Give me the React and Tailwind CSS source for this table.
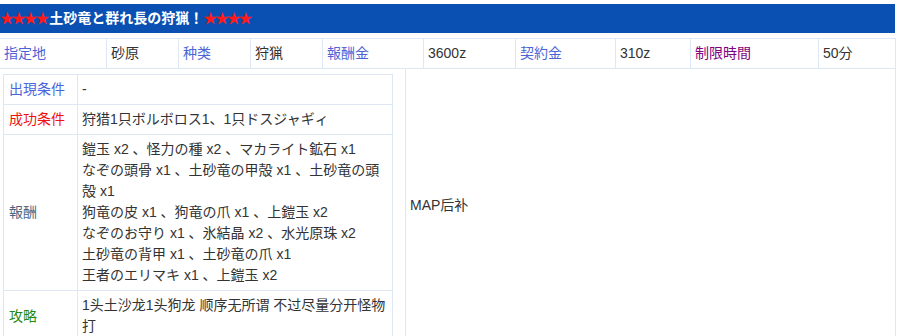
import React from "react";

const font = { fontFamily: '"Liberation Sans", "Noto Sans CJK JP", "Noto Sans CJK SC", sans-serif' };

const Star = () => <span className="text-[#ff1a1a] text-[14px] tracking-[-2.2px]">★★★★</span>;

function TopCell({ w, label, color, last }) {
  return (
    <div
      className={`flex items-center pl-[4px] h-full ${last ? "" : "border-r"} border-[#dde8f4] ${w}`}
      style={color ? { color } : undefined}
    >
      {label}
    </div>
  );
}

export default function App() {
  const rewards = [
    "鎧玉 x2 、怪力の種 x2 、マカライト鉱石 x1",
    "なぞの頭骨 x1 、土砂竜の甲殻 x1 、土砂竜の頭殻 x1",
    "狗竜の皮 x1 、狗竜の爪 x1 、上鎧玉 x2",
    "なぞのお守り x1 、氷結晶 x2 、水光原珠 x2",
    "土砂竜の背甲 x1 、土砂竜の爪 x1",
    "王者のエリマキ x1 、上鎧玉 x2",
  ];
  return (
    <div className="w-[897px] h-[336px] overflow-hidden bg-white text-[14px] text-[#333] leading-[21px]" style={font}>
      <div className="pt-[4px] w-[895px]">
        <div className="h-[29px] bg-[#0a50b3] flex items-center font-bold text-white text-[14px]">
          <Star />
          <span className="ml-[2px]">土砂竜と群れ長の狩猟！</span>
          <Star />
        </div>
      </div>
      <div className="mt-[5px] w-[896px] h-[31px] border-y border-r border-[#dde8f4] flex">
        <TopCell w="w-[107px]" label="指定地" color="#4d63d6" />
        <TopCell w="w-[72px]" label="砂原" />
        <TopCell w="w-[72px]" label="种类" color="#4d63d6" />
        <TopCell w="w-[72px]" label="狩猟" />
        <TopCell w="w-[101px]" label="報酬金" color="#4d63d6" />
        <TopCell w="w-[92px]" label="3600z" />
        <TopCell w="w-[100px]" label="契約金" color="#4d63d6" />
        <TopCell w="w-[75px]" label="310z" />
        <TopCell w="w-[128px]" label="制限時間" color="#800080" />
        <TopCell w="flex-1" label="50分" last />
      </div>
      <div className="flex w-[896px] border-r border-[#dde8f4]">
        <div className="w-[405px] pl-[3px] pt-[5px]">
          <div className="w-[390px] border border-[#dde8f4]">
            <div className="flex border-b border-[#dde8f4]">
              <div className="w-[74px] border-r border-[#dde8f4] py-[4px] pl-[5px] flex items-center text-[#4b66dc]">出現条件</div>
              <div className="flex-1 py-[4px] pl-[4px]">-</div>
            </div>
            <div className="flex border-b border-[#dde8f4]">
              <div className="w-[74px] border-r border-[#dde8f4] py-[4px] pl-[5px] flex items-center text-[#f01010]">成功条件</div>
              <div className="flex-1 py-[4px] pl-[4px]">狩猎1只ボルボロス1、1只ドスジャギィ</div>
            </div>
            <div className="flex border-b border-[#dde8f4]">
              <div className="w-[74px] border-r border-[#dde8f4] py-[4px] pl-[5px] flex items-center text-[#4a6584]">報酬</div>
              <div className="flex-1 py-[4px] pl-[4px] pr-[6px]">
                {rewards.map((r, i) => (
                  <div key={i}>{r}</div>
                ))}
              </div>
            </div>
            <div className="flex">
              <div className="w-[74px] border-r border-[#dde8f4] py-[4px] pl-[5px] flex items-center text-[#1f8a12]">攻略</div>
              <div className="flex-1 py-[4px] pl-[4px] pr-[6px]">1头土沙龙1头狗龙 顺序无所谓 不过尽量分开怪物打</div>
            </div>
          </div>
        </div>
        <div className="flex-1 border-l border-[#dde8f4] pl-[4px] flex items-center">MAP后补</div>
      </div>
    </div>
  );
}
